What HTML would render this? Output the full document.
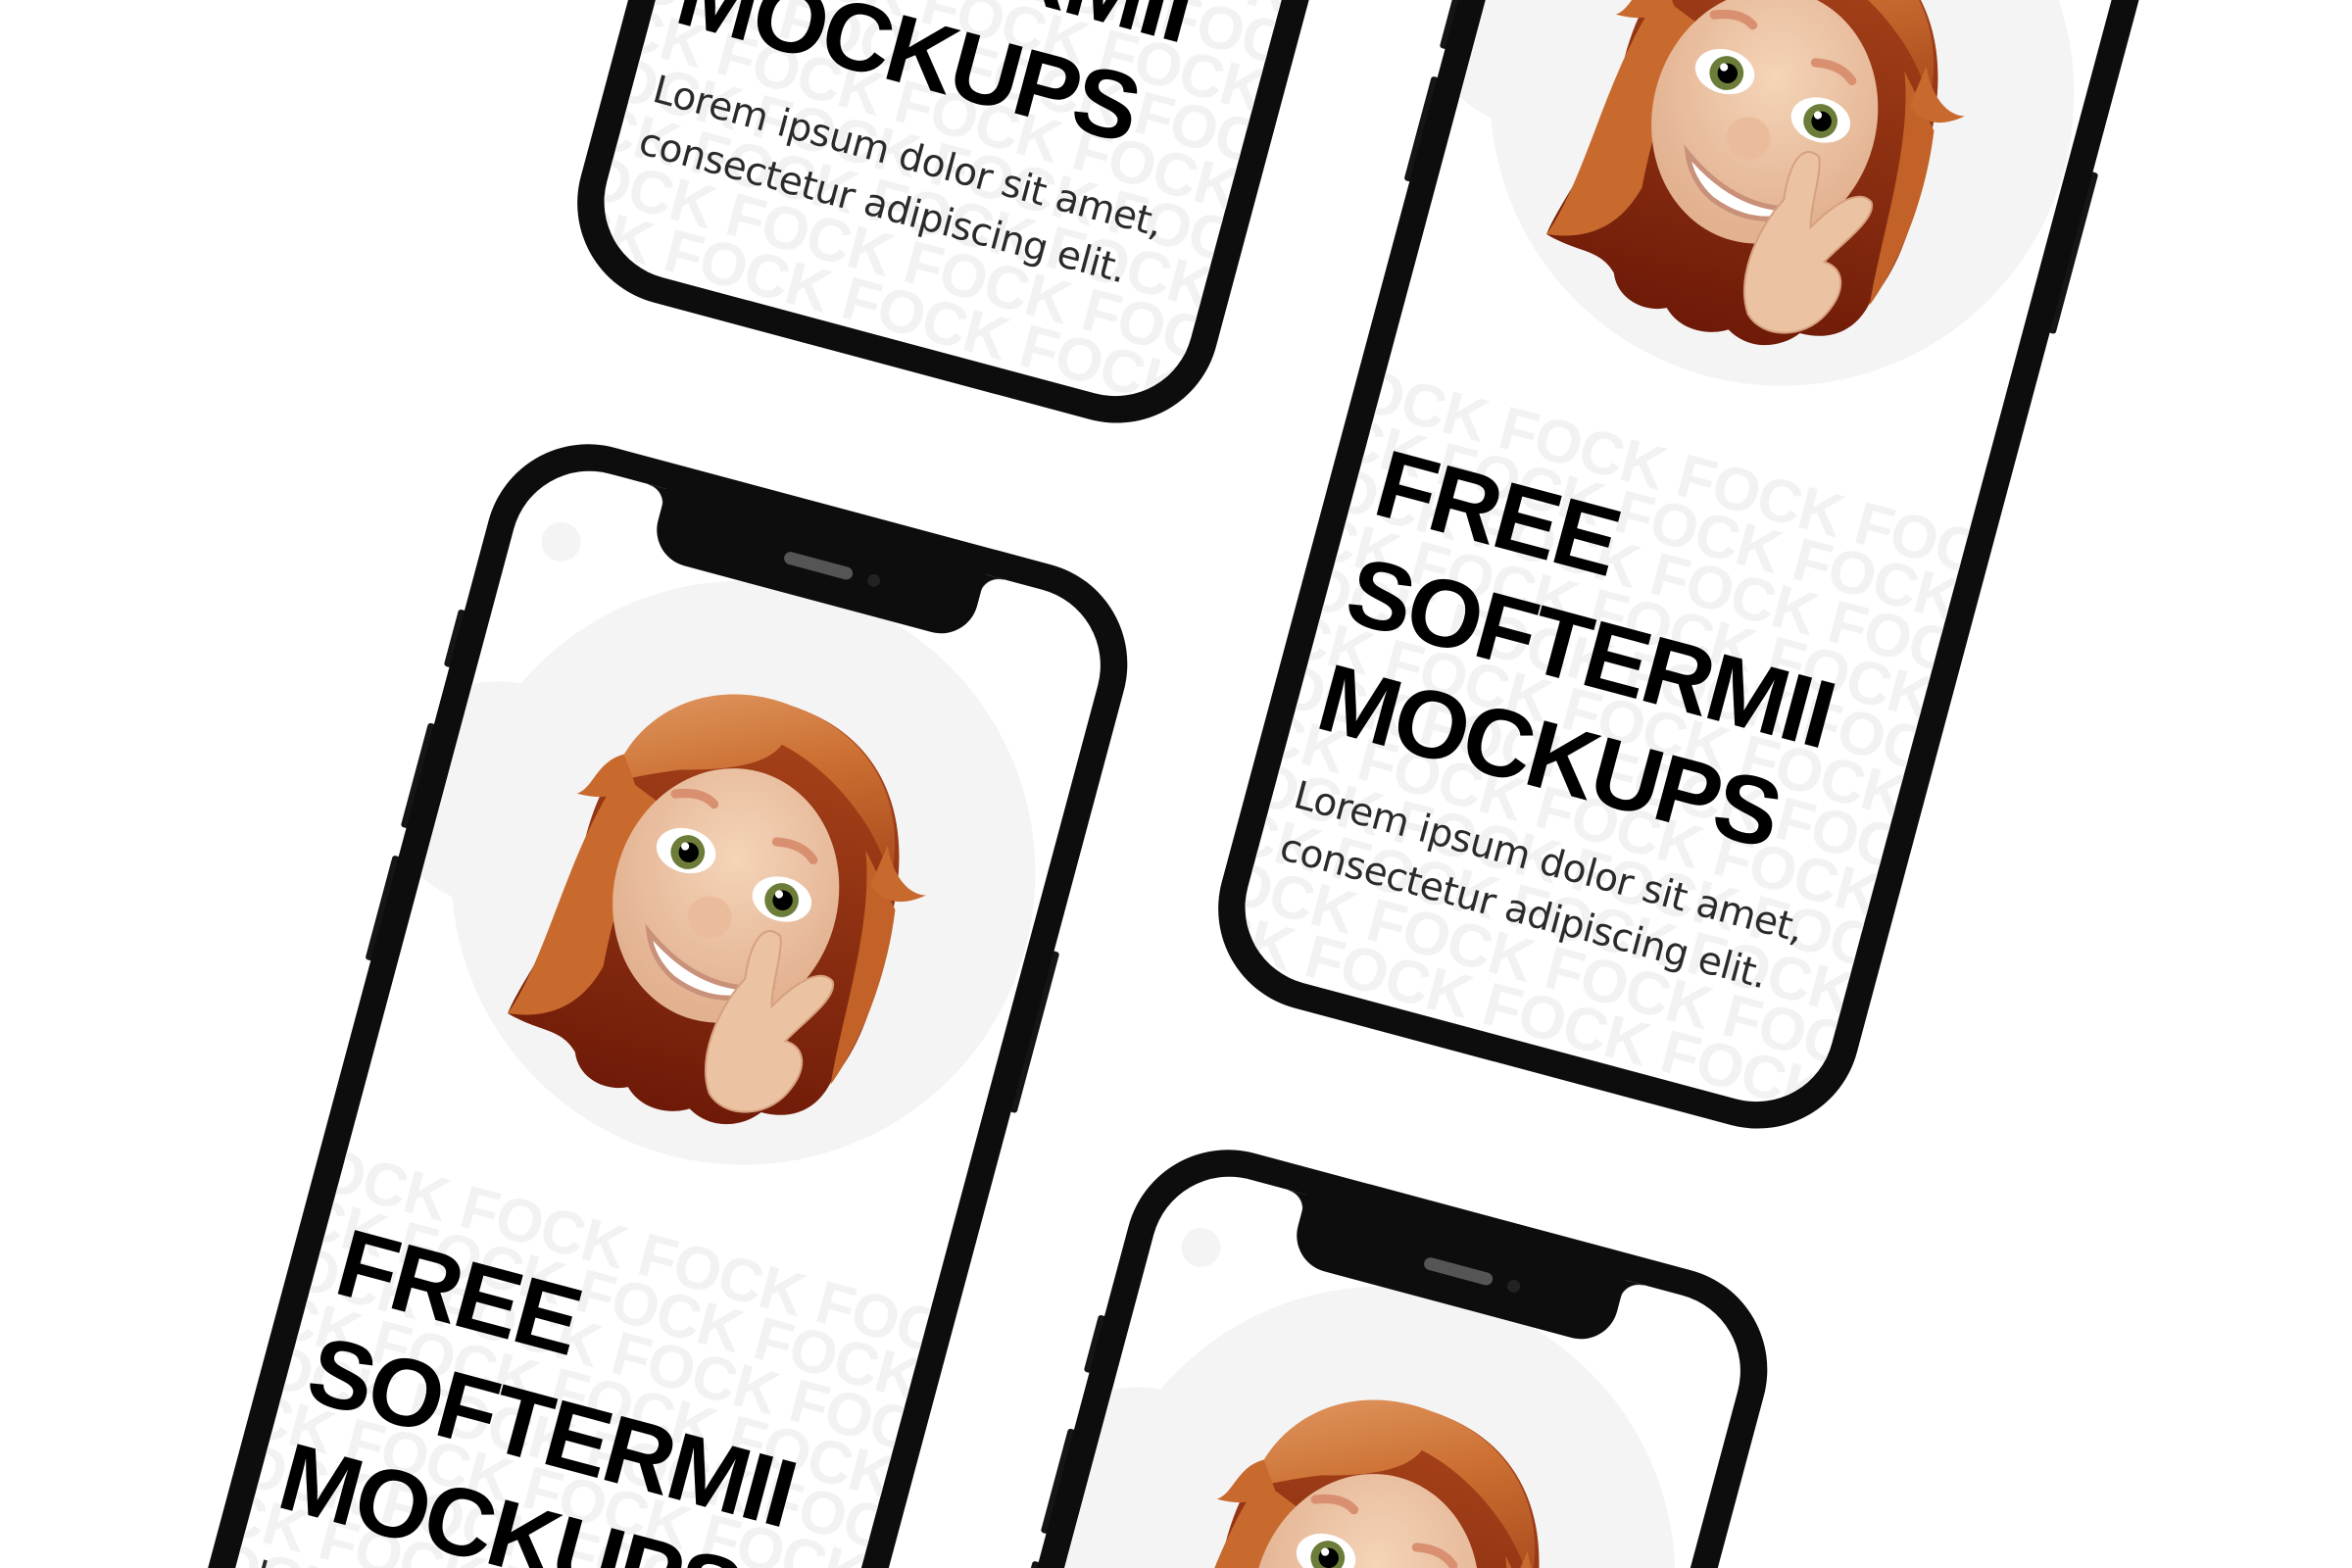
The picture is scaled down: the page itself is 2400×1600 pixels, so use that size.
<!DOCTYPE html>
<html><head><meta charset="utf-8"><style>
html,body{margin:0;padding:0;width:2400px;height:1600px;overflow:hidden;background:#fff}
#wrap{position:relative;width:2400px;height:1600px;overflow:hidden;background:#fff;clip-path:inset(0 0 0 0)}
.ph{position:absolute;width:671px;height:1415px;transform:rotate(15deg);transform-origin:335.5px 720px}
.body{position:absolute;inset:0;background:#0d0d0d;border-radius:105px}
.scr{position:absolute;left:27px;top:27px;right:27px;bottom:27px;background:#fff;border-radius:80px;overflow:hidden}
.notch{position:absolute;left:167px;top:20px;width:337px;height:78px;background:#0d0d0d;border-radius:0 0 38px 38px}
.notch:before,.notch:after{content:"";position:absolute;top:7px;width:20px;height:20px}
.notch:before{left:-19px;background:radial-gradient(circle at 0 100%,transparent 19px,#0d0d0d 20px)}
.notch:after{right:-19px;background:radial-gradient(circle at 100% 100%,transparent 19px,#0d0d0d 20px)}
.spk{position:absolute;left:134px;top:36px;width:72px;height:13px;border-radius:7px;background:#555}
.cam{position:absolute;left:222px;top:36px;width:13px;height:13px;border-radius:50%;background:#222}
.btn{position:absolute;background:#151515;width:8px;border-radius:3px}
.c{position:absolute;border-radius:50%;background:#f4f4f4}
.wm{position:absolute;left:-60px;top:735px;width:800px;font:900 62px/52px "Liberation Sans",sans-serif;color:#f2f2f2;white-space:nowrap;letter-spacing:-1px}
.h{position:absolute;left:22px;top:790px;font:900 98px/113px "Liberation Sans",sans-serif;color:#000;letter-spacing:-3px;white-space:nowrap}
.p{position:absolute;left:22px;top:1150px;font:39px/55px "DejaVu Sans","Liberation Sans",sans-serif;color:#2a2a2a;white-space:nowrap;letter-spacing:-0.5px}
.av{position:absolute;left:106px;top:150px;width:410px;height:470px}
</style></head><body><div id="wrap">
<svg width="0" height="0" style="position:absolute">
<defs>
<linearGradient id="hg" x1="0" y1="0" x2="1" y2="1"><stop offset="0" stop-color="#e3a06a"/><stop offset=".5" stop-color="#cc6f32"/><stop offset="1" stop-color="#a84a1c"/></linearGradient>
<linearGradient id="bh" x1="0" y1="0" x2="0" y2="1"><stop offset="0" stop-color="#a9441a"/><stop offset="1" stop-color="#6e1a08"/></linearGradient>
<radialGradient id="fg" cx=".5" cy=".35" r=".6"><stop offset="0" stop-color="#f5d4b8"/><stop offset="1" stop-color="#e2b190"/></radialGradient>
<g id="avatar">
<path d="M200 30 C90 30 40 120 45 220 C50 300 20 360 15 400 C50 410 70 400 90 420 C100 445 130 450 150 440 C170 460 200 455 215 445 C240 460 270 450 285 430 C320 430 340 410 345 380 C370 330 365 260 360 200 C355 100 300 30 200 30Z" fill="url(#bh)"/>
<path d="M62 140 C30 230 40 330 15 400 C60 395 85 370 95 330 C90 260 95 200 112 160 Z" fill="#c86a2e"/>
<path d="M318 150 C345 220 338 320 345 385 C362 340 372 270 362 200 Z" fill="#c26228"/>
<ellipse cx="195" cy="230" rx="112" ry="128" fill="url(#fg)"/>
<path d="M55 150 C60 70 130 20 210 30 C290 35 345 90 350 170 C335 150 320 130 300 115 C270 90 235 75 210 70 C200 95 160 110 120 120 C95 130 75 140 55 150 Z" fill="url(#hg)"/>
<path d="M60 120 C35 135 40 160 25 170 C55 170 65 160 80 148 Z" fill="#c8692e"/>
<path d="M338 140 C352 170 372 182 388 178 C362 200 342 192 332 182 Z" fill="#c8692e"/>
<path d="M120 145 Q145 135 160 145" stroke="#d99070" stroke-width="9" fill="none" stroke-linecap="round"/>
<path d="M230 165 Q255 160 270 173" stroke="#d99070" stroke-width="9" fill="none" stroke-linecap="round"/>
<ellipse cx="145" cy="197" rx="30" ry="22" fill="#fff"/><circle cx="147" cy="198" r="17" fill="#6c7d3a"/><circle cx="148" cy="198" r="10" fill="#000"/><circle cx="143" cy="193" r="4" fill="#fff"/>
<ellipse cx="250" cy="219" rx="30" ry="22" fill="#fff"/><circle cx="250" cy="220" r="17" fill="#6c7d3a"/><circle cx="251" cy="220" r="10" fill="#000"/><circle cx="246" cy="215" r="4" fill="#fff"/>
<ellipse cx="185" cy="255" rx="22" ry="21" fill="#ebbc9b"/>
<path d="M130 285 Q200 335 265 305 Q220 345 165 323 Q140 310 130 285 Z" fill="#fff" stroke="#c9917a" stroke-width="5"/>
<path d="M235 305 C230 265 240 245 258 255 C265 270 262 305 268 325 C285 295 305 275 320 285 C330 300 300 335 290 355 C310 355 320 375 305 405 C290 435 250 445 230 425 C210 395 215 345 235 305 Z" fill="#ecc3a2" stroke="#d6a17e" stroke-width="2"/>
</g></defs></svg>

<div class="ph" style="left:734px;top:-1023px">
<div class="btn" style="left:-6px;top:200px;height:60px"></div><div class="btn" style="left:-6px;top:320px;height:110px"></div><div class="btn" style="left:-6px;top:460px;height:110px"></div><div class="btn" style="right:-6px;top:380px;height:170px"></div>
<div class="body"></div><div class="scr">
<div class="c" style="left:30px;top:60px;width:40px;height:40px"></div><div class="c" style="left:90px;top:140px;width:100px;height:100px"></div><div class="c" style="left:-60px;top:230px;width:230px;height:230px"></div><div class="c" style="left:19px;top:60px;width:596px;height:596px"></div>
<div class="wm">FOCK FOCK FOCK FOCK<br>&nbsp;&nbsp;CK FOCK FOCK FOCK FOCK<br>FOCK FOCK FOCK FOCK<br>&nbsp;&nbsp;CK FOCK FOCK FOCK FOCK<br>FOCK FOCK FOCK FOCK<br>&nbsp;&nbsp;CK FOCK FOCK FOCK FOCK<br>FOCK FOCK FOCK FOCK<br>&nbsp;&nbsp;CK FOCK FOCK FOCK FOCK<br>FOCK FOCK FOCK FOCK<br>&nbsp;&nbsp;CK FOCK FOCK FOCK FOCK<br>FOCK FOCK FOCK FOCK<br>&nbsp;&nbsp;CK FOCK FOCK FOCK FOCK<br>FOCK FOCK FOCK FOCK</div>
<svg class="av" viewBox="0 0 400 460"><use href="#avatar"/></svg>
<div class="h">FREE<br>SOFTERMII<br>MOCKUPS</div>
<div class="p">Lorem ipsum dolor sit amet,<br>consectetur adipiscing elit.</div>
</div><div class="notch"><div class="spk"></div><div class="cam"></div></div></div>

<div class="ph" style="left:1388px;top:-303px">
<div class="btn" style="left:-6px;top:200px;height:60px"></div><div class="btn" style="left:-6px;top:320px;height:110px"></div><div class="btn" style="left:-6px;top:460px;height:110px"></div><div class="btn" style="right:-6px;top:380px;height:170px"></div>
<div class="body"></div><div class="scr">
<div class="c" style="left:30px;top:60px;width:40px;height:40px"></div><div class="c" style="left:90px;top:140px;width:100px;height:100px"></div><div class="c" style="left:-60px;top:230px;width:230px;height:230px"></div><div class="c" style="left:19px;top:60px;width:596px;height:596px"></div>
<div class="wm">FOCK FOCK FOCK FOCK<br>&nbsp;&nbsp;CK FOCK FOCK FOCK FOCK<br>FOCK FOCK FOCK FOCK<br>&nbsp;&nbsp;CK FOCK FOCK FOCK FOCK<br>FOCK FOCK FOCK FOCK<br>&nbsp;&nbsp;CK FOCK FOCK FOCK FOCK<br>FOCK FOCK FOCK FOCK<br>&nbsp;&nbsp;CK FOCK FOCK FOCK FOCK<br>FOCK FOCK FOCK FOCK<br>&nbsp;&nbsp;CK FOCK FOCK FOCK FOCK<br>FOCK FOCK FOCK FOCK<br>&nbsp;&nbsp;CK FOCK FOCK FOCK FOCK<br>FOCK FOCK FOCK FOCK</div>
<svg class="av" viewBox="0 0 400 460"><use href="#avatar"/></svg>
<div class="h">FREE<br>SOFTERMII<br>MOCKUPS</div>
<div class="p">Lorem ipsum dolor sit amet,<br>consectetur adipiscing elit.</div>
</div><div class="notch"><div class="spk"></div><div class="cam"></div></div></div>

<div class="ph" style="left:328px;top:492px">
<div class="btn" style="left:-6px;top:200px;height:60px"></div><div class="btn" style="left:-6px;top:320px;height:110px"></div><div class="btn" style="left:-6px;top:460px;height:110px"></div><div class="btn" style="right:-6px;top:380px;height:170px"></div>
<div class="body"></div><div class="scr">
<div class="c" style="left:30px;top:60px;width:40px;height:40px"></div><div class="c" style="left:90px;top:140px;width:100px;height:100px"></div><div class="c" style="left:-60px;top:230px;width:230px;height:230px"></div><div class="c" style="left:19px;top:60px;width:596px;height:596px"></div>
<div class="wm">FOCK FOCK FOCK FOCK<br>&nbsp;&nbsp;CK FOCK FOCK FOCK FOCK<br>FOCK FOCK FOCK FOCK<br>&nbsp;&nbsp;CK FOCK FOCK FOCK FOCK<br>FOCK FOCK FOCK FOCK<br>&nbsp;&nbsp;CK FOCK FOCK FOCK FOCK<br>FOCK FOCK FOCK FOCK<br>&nbsp;&nbsp;CK FOCK FOCK FOCK FOCK<br>FOCK FOCK FOCK FOCK<br>&nbsp;&nbsp;CK FOCK FOCK FOCK FOCK<br>FOCK FOCK FOCK FOCK<br>&nbsp;&nbsp;CK FOCK FOCK FOCK FOCK<br>FOCK FOCK FOCK FOCK</div>
<svg class="av" viewBox="0 0 400 460"><use href="#avatar"/></svg>
<div class="h">FREE<br>SOFTERMII<br>MOCKUPS</div>
<div class="p">Lorem ipsum dolor sit amet,<br>consectetur adipiscing elit.</div>
</div><div class="notch"><div class="spk"></div><div class="cam"></div></div></div>

<div class="ph" style="left:981px;top:1212px">
<div class="btn" style="left:-6px;top:200px;height:60px"></div><div class="btn" style="left:-6px;top:320px;height:110px"></div><div class="btn" style="left:-6px;top:460px;height:110px"></div><div class="btn" style="right:-6px;top:380px;height:170px"></div>
<div class="body"></div><div class="scr">
<div class="c" style="left:30px;top:60px;width:40px;height:40px"></div><div class="c" style="left:90px;top:140px;width:100px;height:100px"></div><div class="c" style="left:-60px;top:230px;width:230px;height:230px"></div><div class="c" style="left:19px;top:60px;width:596px;height:596px"></div>
<svg class="av" viewBox="0 0 400 460"><use href="#avatar"/></svg>
</div><div class="notch"><div class="spk"></div><div class="cam"></div></div></div>

</div></body></html>
